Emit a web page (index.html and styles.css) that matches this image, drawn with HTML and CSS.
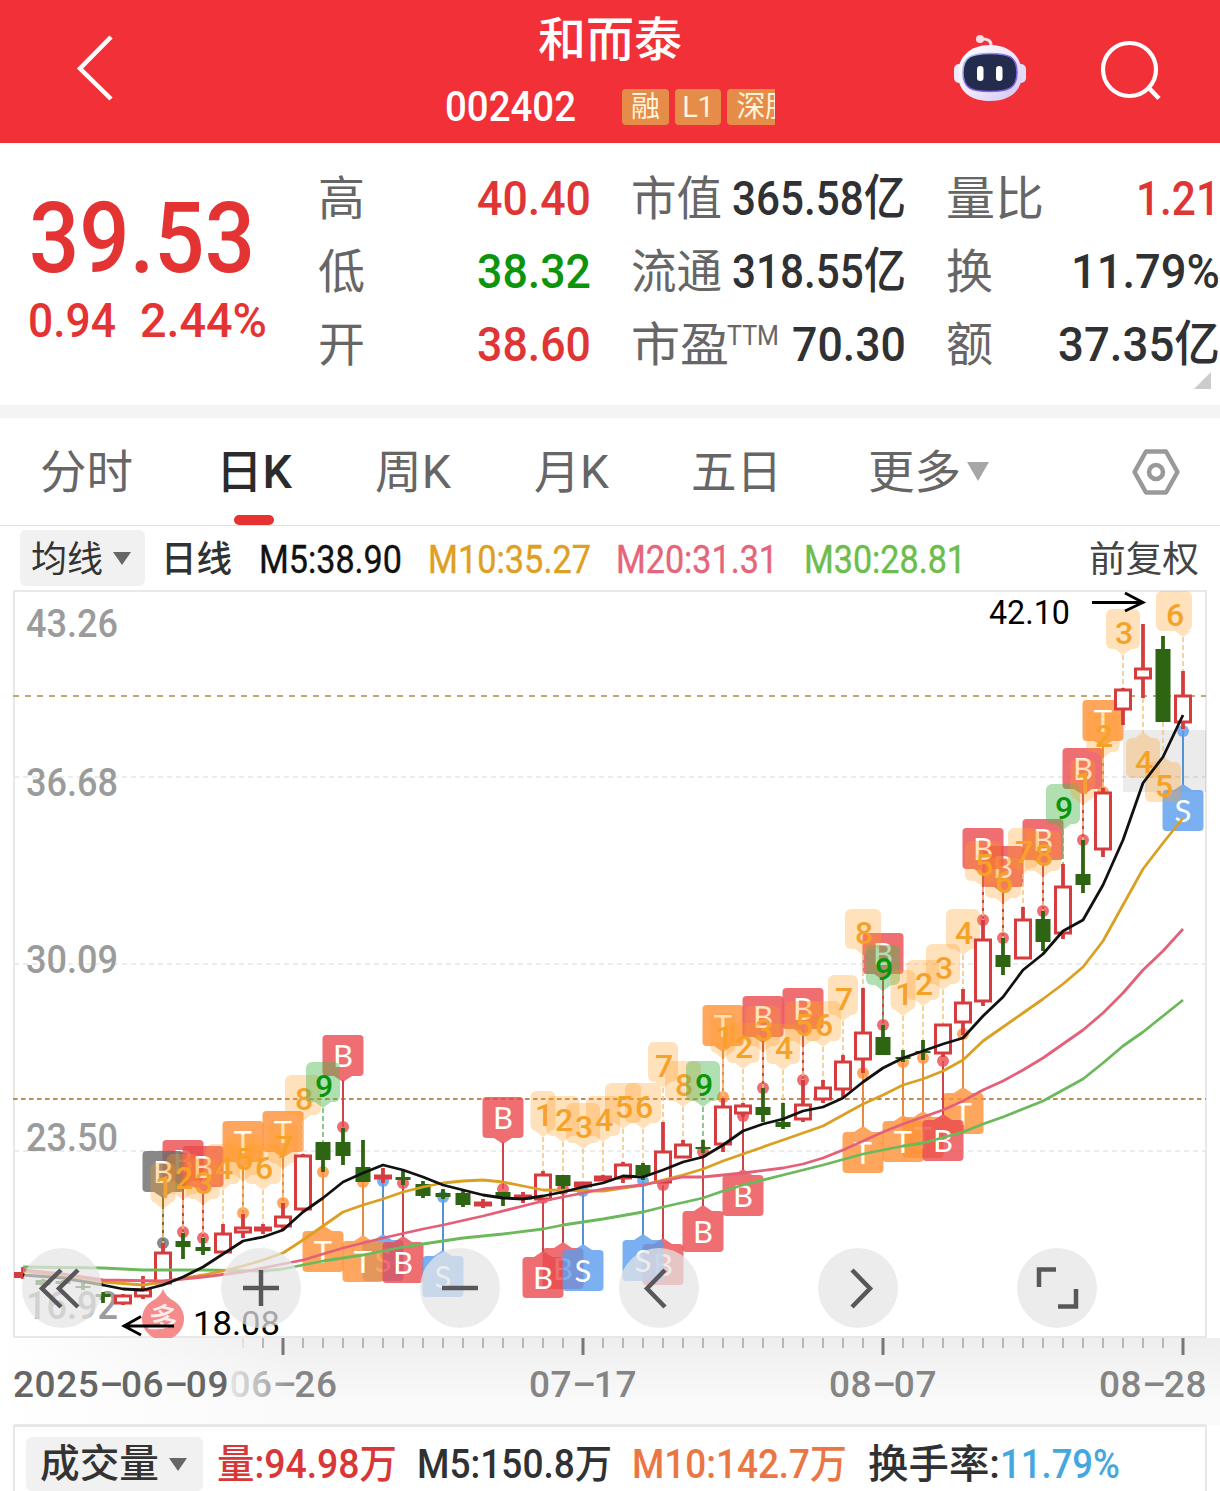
FILE: index.html
```html
<!DOCTYPE html>
<html lang="zh-CN">
<head>
<meta charset="utf-8">
<title>和而泰 002402</title>
<link rel="stylesheet" href="styles.css">
</head>
<body>
<header class="topbar">
  <svg class="back" width="44" height="70" viewBox="0 0 44 70"><path d="M39 4 8 35.500 39 66" fill="none" stroke="#fff" stroke-width="4.500"/></svg>
  <div class="heading">
    <h1 class="fit" data-w="144">和而泰</h1>
    <div class="subline">
      <span class="code fit" data-w="131">002402</span>
      <div class="tags"><span>融</span><span>L1</span><span>深股</span></div>
    </div>
  </div>
  <svg class="bot" width="76" height="70" viewBox="952 34 76 70">
    <defs>
      <linearGradient id="shell" x1="0" y1="0" x2="1" y2="1"><stop offset="0" stop-color="#fff"/><stop offset=".55" stop-color="#eee6fb"/><stop offset="1" stop-color="#cfc4f4"/></linearGradient>
      <linearGradient id="rim" x1="0" y1="0" x2="1" y2="1"><stop offset="0" stop-color="#a9dcf5"/><stop offset=".5" stop-color="#7a5ce0"/><stop offset="1" stop-color="#8b63e6"/></linearGradient>
    </defs>
    <path d="M981 39Q992 38 991 47" fill="none" stroke="#f6dfe9" stroke-width="3"/>
    <circle cx="980" cy="39" r="4" fill="#fbdce4"/>
    <rect x="954" y="64" width="10" height="19" rx="5" fill="#f0e9fa"/><rect x="1016" y="64" width="10" height="19" rx="5" fill="#e1dbf5"/>
    <path d="M990 45C1010 45 1022 57 1022 74C1022 91 1010 101 990 101C970 101 958 91 958 74C958 57 970 45 990 45Z" fill="url(#shell)"/>
    <path d="M990 53.500C1009 53.500 1017 57 1017 72.500C1017 88 1009 91.500 990 91.500C971 91.500 963 88 963 72.500C963 57 971 53.500 990 53.500Z" fill="#242c4e" stroke="url(#rim)" stroke-width="1.500"/>
    <rect x="977" y="66" width="6.500" height="15" rx="3.200" fill="#fff"/><rect x="996" y="66" width="6.500" height="15" rx="3.200" fill="#fff"/>
  </svg>
  <svg class="search" width="66" height="66" viewBox="1098 38 66 66"><g fill="none" stroke="#fff" stroke-width="4.200"><circle cx="1129.500" cy="69.500" r="26.500"/><path d="M1148 87 1159 98.500" stroke-width="4.500"/></g></svg>
</header>

<section class="quote">
  <div class="price">
    <div class="last"><span class="fit" data-w="226">39.53</span></div>
    <div class="change"><span class="fit" data-w="88">0.94</span><span class="fit" data-w="127">2.44%</span></div>
  </div>
  <div class="stats">
    <span class="k">高</span><span class="v up"><span class="fit" data-w="114">40.40</span></span>
    <span class="k"><span class="fit" data-w="91">市值</span></span><span class="v"><span class="fit" data-w="174">365.58亿</span></span>
    <span class="k"><span class="fit" data-w="98">量比</span></span><span class="v up"><span class="fit" data-w="84">1.21</span></span>
    <span class="k">低</span><span class="v down"><span class="fit" data-w="114">38.32</span></span>
    <span class="k"><span class="fit" data-w="91">流通</span></span><span class="v"><span class="fit" data-w="174">318.55亿</span></span>
    <span class="k">换</span><span class="v"><span class="fit" data-w="149">11.79%</span></span>
    <span class="k">开</span><span class="v up"><span class="fit" data-w="114">38.60</span></span>
    <span class="k"><span class="fit" data-w="98">市盈</span><small class="fit" data-w="52">TTM</small></span><span class="v"><span class="fit" data-w="114">70.30</span></span>
    <span class="k">额</span><span class="v"><span class="fit" data-w="162">37.35亿</span></span>
  </div>
  <i class="corner"></i>
</section>

<nav class="tabs">
  <a><span class="fit" data-w="93">分时</span></a>
  <a class="on"><span class="fit" data-w="76">日K</span></a>
  <a><span class="fit" data-w="76">周K</span></a>
  <a><span class="fit" data-w="75">月K</span></a>
  <a><span class="fit" data-w="91">五日</span></a>
  <a><span class="fit" data-w="93">更多</span><i class="tri light"></i></a>
  <svg class="gear" width="50" height="48" viewBox="0 0 50 48"><g fill="none" stroke="#999" stroke-width="4.500" stroke-linejoin="round"><path d="M15 3.500H35L46.500 24 35 44.500H15L3.500 24Z"/><circle cx="25" cy="24" r="7"/></g></svg>
</nav>

<div class="ma">
  <span class="pick"><span class="fit" data-w="72">均线</span><i class="tri"></i></span>
  <span class="fit name" data-w="71">日线</span>
  <span class="fit m5" data-w="143">M5:38.90</span>
  <span class="fit m10" data-w="163">M10:35.27</span>
  <span class="fit m20" data-w="162">M20:31.31</span>
  <span class="fit m30" data-w="162">M30:28.81</span>
  <span class="fit adj" data-w="110">前复权</span>
</div>

<main class="chart">
  <svg id="plot" width="1220" height="748" viewBox="0 590 1220 748"></svg>
  <div class="controls">
    <button><svg viewBox="0 0 80 80"><path d="M39 22 20 40.500 39 59M56 22 37 40.500 56 59"/></svg></button>
    <button><svg viewBox="0 0 80 80"><path d="M40 22V58M22 40H58"/></svg></button>
    <button><svg viewBox="0 0 80 80"><path d="M22 40H58"/></svg></button>
    <button><svg viewBox="0 0 80 80"><path d="M46 22 28 40.500 46 59"/></svg></button>
    <button><svg viewBox="0 0 80 80"><path d="M34 22 52 40.500 34 59"/></svg></button>
    <button><svg viewBox="0 0 80 80"><path d="M39 21.500H22V39M41 58.500H59V41"/></svg></button>
  </div>
</main>

<div class="axis"><svg id="dates" width="1220" height="87" viewBox="0 1338 1220 87"></svg></div>

<footer class="volume">
  <span class="pick"><span class="fit" data-w="119">成交量</span><i class="tri"></i></span>
  <span class="fit vol" data-w="180">量:94.98万</span>
  <span class="fit v5" data-w="195">M5:150.8万</span>
  <span class="fit v10" data-w="215">M10:142.7万</span>
  <span class="fit rate" data-w="132">换手率:</span>
  <span class="fit pct" data-w="120">11.79%</span>
</footer>
<script src="chart.js"></script>
</body>
</html>
```
FILE: styles.css
```css
* { box-sizing: border-box; }
body { margin: 0; width: 1220px; height: 1491px; overflow: hidden; background: #fff; color: #303133; font-family: Roboto, "Noto Sans CJK SC", sans-serif; }
.fit { display: inline-block; white-space: nowrap; }
.fit > span { display: inline-block; transform-origin: 0 50%; }

.topbar { height: 143px; background: #f13037; color: #fff; display: flex; align-items: flex-start; }
.back { margin: 33px 0 0 72px; flex: none; }
.heading { width: 338px; margin-left: 322px; flex: none; }
h1 { margin: 5px 0 0 100px; font-size: 47px; line-height: 70px; font-weight: 500; }
.subline { display: flex; align-items: center; height: 50px; margin-top: 7px; padding-left: 7px; }
.code { font-size: 42px; font-weight: 500; line-height: 50px; }
.tags { display: flex; gap: 6px; width: 153px; margin-left: 46px; overflow: hidden; }
.tags span { flex: none; width: 46.500px; height: 36px; border-radius: 4px; background: #e58c49; color: #fff3dc; font-size: 29px; line-height: 36px; text-align: center; letter-spacing: -.5px; }
.tags span:last-child { width: 76px; }
.bot { margin: 34px 0 0 176px; flex: none; }
.search { margin: 38px 0 0 70px; flex: none; }

.quote { position: relative; height: 275px; border-bottom: 13px solid #f4f4f4; display: flex; }
.price { width: 318px; color: #e43333; padding: 45px 0 0 29px; }
.last { font-size: 99px; line-height: 100px; font-weight: 500; }
.change { display: flex; gap: 24px; font-size: 49px; line-height: 50px; font-weight: 500; margin: 8px 0 0 -1px; }
.stats { display: grid; grid-template-columns: 110px 163px 161px 154px 138px 176px; grid-template-rows: repeat(3, 73px); padding-top: 19px; line-height: 73px; font-size: 48.500px; }
.stats > :nth-child(6n+3), .stats > :nth-child(6n+5) { padding-left: 40px; }
.k { color: #666; font-size: 47px; white-space: nowrap; display: flex; }
.v { font-weight: 500; display: flex; justify-content: flex-end; }
.k small { font-size: 27px; line-height: 56px; margin-left: 2px; }
.up { color: #df3535; }
.down { color: #0d940d; }
.corner { position: absolute; right: 9px; bottom: 16px; border: solid transparent; border-width: 0 0 17px 17px; border-bottom-color: #ccc; }

.tabs { height: 108px; border-bottom: 1px solid #e2e2e2; display: grid; grid-template-columns: 178px 157px 159px 157px 177px 264px 60px; padding-left: 40px; color: #666; font-size: 46px; line-height: 106px; }
.tabs a { position: relative; display: flex; align-items: center; white-space: nowrap; }
.tabs .on { color: #2b2b2b; font-weight: 500; }
.tabs .on .fit { margin-left: -2px; }
.tabs .on::after { content: ""; position: absolute; left: 16px; bottom: 0; width: 40px; height: 10px; border-radius: 5px; background: #e73232; }
.gear { align-self: center; margin-left: -1px; }
.tri { display: inline-block; border: 9.500px solid transparent; border-top: 13px solid #666; border-bottom: 0; }
.tri.light { border: 11.500px solid transparent; border-top: 19px solid #a6a6a6; border-bottom: 0; margin-left: 6px; }

.ma { height: 64px; padding: 4px 0 4px 20px; display: flex; align-items: center; font-size: 38px; line-height: 54px; }
.ma .fit { padding-top: 3px; height: 56px; }
.ma .pick { width: 125px; height: 56px; padding-left: 11px; gap: 10px; font-size: 36px; }
.pick { display: flex; align-items: center; background: #f1f1f1; border-radius: 6px; color: #333; }
.name { margin-left: 16px; font-size: 36px; font-weight: 500; }
.ma .m5, .ma .m10, .ma .m20, .ma .m30 { -webkit-text-stroke: .4px; }
.m5 { margin-left: 27px; color: #111; }
.m10 { margin-left: 26px; color: #dda022; }
.m20 { margin-left: 25px; color: #e5657a; }
.m30 { margin-left: 26px; color: #6bbd4c; }
.adj { margin-left: 123px; color: #444; font-size: 36px; }

.chart { position: relative; height: 748px; }
.chart > svg, .axis svg { display: block; }
.controls { position: absolute; left: 22px; bottom: 10px; display: flex; gap: 119px; }
.controls button { width: 80px; height: 80px; padding: 0; border: 0; border-radius: 50%; background: rgba(229, 229, 229, .73); }
.controls path { fill: none; stroke: #58585a; stroke-width: 4.500; }
.glyph, .mark { font-family: "Noto Sans CJK SC", sans-serif; }
.mark { font-family: Lato, "Noto Sans CJK SC", sans-serif; }

.axis { height: 87px; background: linear-gradient(90deg, #fff 0, rgba(255,255,255,0) 300px), linear-gradient(#eee, #fafafa 75%); }
.volume { height: 66px; margin: 0 13px; border: 2px solid #e8e8e8; border-bottom: 0; display: flex; align-items: center; padding: 10px 0 0 11px; font-size: 40px; line-height: 53px; font-weight: 500; white-space: nowrap; }
.volume .pick { width: 177px; height: 54px; padding-left: 14px; gap: 10px; font-size: 39px; }
.volume .fit { flex: none; }
.vol { margin-left: 14px; color: #d93636; }
.v5 { margin-left: 20px; }
.v10 { margin-left: 20px; color: #ea7644; }
.rate { margin-left: 21px; }
.pct { color: #45a7e0; }
```
FILE: chart.js
```js
// Squeeze each label to its column width
document.querySelectorAll('.fit').forEach(function (el) {
  var w = +el.dataset.w, t = document.createElement('span');
  t.textContent = el.textContent;
  el.textContent = '';
  el.appendChild(t);
  var n = t.getBoundingClientRect().width;
  t.style.transform = 'scaleX(' + w / n + ')';
  el.style.width = w + 'px';
});

// [high, bodyTop, bodyBottom, low, rising]
var candles = [
  [1267,1272,1278,1279,1],[1279,1280,1285,1286,0],[1280,1281,1284,1286,0],[1282,1286,1288,1290,0],[1292,1294,1297,1303,0],
  [1294,1295,1304,1305,1],[1276,1289,1297,1299,1],[1243,1252,1284,1285,1],[1233,1241,1247,1259,0],[1238,1247,1251,1255,0],
  [1224,1233,1253,1253,1],[1214,1227,1233,1238,1],[1224,1227,1231,1234,1],[1203,1216,1227,1229,1],[1154,1155,1210,1211,1],
  [1142,1142,1160,1172,0],[1128,1142,1156,1165,0],[1140,1167,1182,1182,0],[1168,1175,1179,1183,1],[1171,1177,1180,1185,0],
  [1181,1184,1196,1198,0],[1189,1193,1197,1199,0],[1189,1193,1205,1207,0],[1199,1202,1206,1208,1],[1192,1192,1197,1206,0],
  [1192,1195,1199,1203,1],[1171,1174,1200,1200,1],[1175,1175,1186,1190,0],[1182,1182,1187,1187,1],[1175,1176,1181,1181,1],
  [1162,1164,1179,1183,1],[1163,1165,1175,1180,0],[1122,1151,1183,1183,1],[1140,1144,1158,1158,1],[1140,1147,1149,1153,0],
  [1098,1106,1145,1152,1],[1103,1105,1114,1117,1],[1088,1107,1115,1122,0],[1103,1122,1127,1129,0],[1080,1104,1120,1122,1],
  [1080,1087,1100,1103,1],[1055,1061,1090,1097,1],[988,1032,1060,1073,1],[1025,1037,1055,1055,0],[1050,1057,1059,1062,0],
  [1040,1051,1053,1060,0],[1024,1024,1054,1057,1],[989,1002,1023,1035,1],[920,939,1002,1006,1],[938,955,967,975,0],
  [907,919,959,959,1],[911,919,942,951,0],[864,886,934,939,1],[840,874,885,893,0],[788,792,850,857,1],
  [688,689,710,725,1],[624,668,679,698,1],[636,649,722,722,0],[671,695,723,729,1]
];
// [x, letter, anchor y, below?], painted in this order
var signals = [
  [183,'B',1232,0],[1003,'B',938,0],[383,'S',1181,1],[563,'B',1189,1],[663,'B',1185,1],[963,'T',1034,1],[923,'T',1058,1],
  [163,'N',1243,0],[203,'B',1238,0],[243,'T',1213,0],[283,'T',1203,0],[343,'B',1127,0],[503,'B',1189,0],
  [723,'T',1097,0],[763,'B',1088,0],[803,'B',1080,0],[883,'B',1025,0],[983,'B',920,0],[1043,'B',911,0],
  [1083,'B',840,0],[1103,'T',792,0],[323,'T',1172,1],[363,'T',1182,1],[403,'B',1183,1],[443,'S',1197,1],
  [543,'B',1198,1],[583,'S',1191,1],[643,'S',1181,1],[703,'B',1152,1],[743,'B',1116,1],
  [863,'T',1073,1],[903,'T',1062,1],[943,'B',1061,1],[1183,'S',731,1]
];
// [x, digit, box top]
var counts = [
  [163,1,1163],[183,2,1154],[203,3,1159],[223,4,1144],[243,5,1135],[263,6,1144],[283,7,1123],[303,8,1075],[323,9,1062],
  [543,1,1091],[563,2,1096],[583,3,1103],[603,4,1096],[623,5,1083],[643,6,1083],[663,7,1042],[683,8,1061],[703,9,1061],
  [723,1,1013],[743,2,1023],[763,3,1006],[783,4,1024],[803,5,1001],[823,6,1001],[843,7,975],[863,8,909],[883,9,945],
  [903,1,970],[923,2,960],[943,3,944],[963,4,909],[983,5,841],[1003,6,858],[1023,7,828],[1043,8,831],[1063,9,784],
  [1083,1,759],[1103,2,712],[1123,3,609],[1183,6,591]
];
var averages = {
  '#6bb95a': '23,1267 103,1268 143,1270 203,1270 263,1271 283,1269 303,1265 323,1261 363,1255 403,1247 443,1241 463,1238 503,1234 543,1229 563,1225 603,1219 643,1212 663,1207 703,1198 723,1191 743,1185 783,1175 823,1165 863,1154 903,1146 923,1143 963,1132 983,1124 1003,1117 1043,1101 1083,1079 1103,1063 1123,1046 1143,1032 1163,1016 1183,1000',
  '#dba022': '23,1271 63,1276 103,1282 143,1285 163,1282 203,1275 223,1271 243,1266 263,1260 283,1253 303,1240 323,1226 343,1212 363,1205 383,1199 403,1192 423,1187 443,1183 463,1181 483,1180 503,1182 523,1186 543,1190 603,1191 623,1188 643,1185 663,1180 683,1175 703,1169 723,1161 743,1154 783,1140 823,1126 843,1115 863,1104 883,1095 903,1085 923,1079 943,1071 963,1060 983,1041 1003,1027 1023,1013 1043,999 1063,984 1083,967 1103,941 1123,905 1143,869 1163,843 1183,818',
  '#e46078': '23,1270 63,1274 103,1280 163,1281 203,1277 243,1272 283,1264 303,1260 343,1248 383,1238 423,1229 443,1225 483,1216 523,1206 543,1201 563,1197 603,1189 643,1185 663,1181 683,1177 703,1177 743,1173 783,1168 803,1164 823,1158 843,1150 863,1141 883,1132 903,1124 943,1110 963,1101 983,1090 1003,1081 1023,1070 1043,1058 1083,1030 1103,1013 1123,993 1143,970 1163,951 1183,929',
  '#111': '23,1275 63,1278 103,1285 123,1289 143,1290 163,1285 183,1277 203,1267 223,1254 243,1241 263,1237 283,1230 303,1212 323,1198 343,1182 363,1173 383,1165 403,1170 423,1177 443,1185 463,1190 483,1195 503,1198 523,1199 543,1196 563,1192 583,1187 603,1183 623,1176 643,1177 663,1170 683,1162 703,1157 723,1145 743,1131 763,1124 783,1119 803,1111 823,1107 843,1098 863,1082 883,1068 903,1058 923,1051 943,1044 963,1038 983,1016 1003,997 1023,970 1043,954 1063,931 1083,920 1103,885 1123,840 1143,783 1163,757 1183,715'
};
var fills = { B: '#eb4a4e', T: '#ff9137', S: '#5a9df0', N: '#6b6b6b' };
var stems = { B: '#c9454a', T: '#e68a43', S: '#5592d4', N: '#806830' };
var widths = [0, 25, 33, 34, 34, 36, 36, 30, 36, 34];
var out = '';
function line(x1, y1, x2, y2, c, w, extra) {
  out += '<path d="M' + x1 + ' ' + y1 + 'L' + x2 + ' ' + y2 + '" fill="none" stroke="' + c + '" stroke-width="' + w + '" ' + (extra || '') + '/>';
}
function rect(x, y, w, h, a) { out += '<rect x="' + x + '" y="' + y + '" width="' + w + '" height="' + h + '" ' + a + '/>'; }
function text(x, y, s, size, c, a) { out += '<text x="' + x + '" y="' + y + '" font-size="' + size + '" fill="' + c + '" ' + (a || '') + '>' + s + '</text>'; }
function high(x) { return candles[(x - 23) / 20][0]; }
function count(x, tx, d, top, below) {
  var g = d === 9, w = widths[d], c = g ? '#52b956' : '#ff9f24';
  var edge = below ? top : top + 40, tip = below ? top - 6 : top + 46;
  out += '<g fill="' + c + '" opacity="' + (g ? .45 : .3) + '">';
  rect(tx - w / 2, top, w, 40, 'rx="6"');
  out += '<path d="M' + (x - 8) + ' ' + edge + 'L' + x + ' ' + tip + 'L' + (x + 8) + ' ' + edge + 'Z"/></g>';
  text(tx + 1, top + 34.500, d, 32, g ? '#0b950b' : '#f5a229', 'text-anchor="middle" font-weight="500"');
}

rect(14, 591, 1192, 746, 'fill="none" stroke="#e8e8e8" stroke-width="2"');
[777, 964, 1151].forEach(function (y) { line(14, y, 1206, y, '#e6e6e6', 1.500, 'stroke-dasharray="5 4"'); });
line(13, 696, 1206, 696, '#c2a76e', 2, 'stroke-dasharray="6 6"');
line(13, 1099, 1206, 1099, '#c08a50', 2, 'stroke-dasharray="4.500 3.500"');
rect(1123, 730, 83, 62, 'fill="#000" opacity=".08"');
[['43.26', 637], ['36.68', 796], ['30.09', 973], ['23.50', 1151], ['16.92', 1319]].forEach(function (p) {
  text(26, p[1], p[0], 39, '#9b9b9b', 'font-weight="500" textLength="92" lengthAdjust="spacingAndGlyphs"');
});
signals.forEach(function (s) {
  var x = s[0], y = s[2], c = fills[s[1]], below = s[3], top = below ? y + 59 : y - 92;
  line(x, y, x, below ? top - 5 : top + 45, stems[s[1]], 2);
  out += '<circle cx="' + x + '" cy="' + y + '" r="6" fill="' + c + '" opacity=".8"/><g fill="' + c + '" opacity=".8">';
  rect(x - 20.500, top, 41, 41, 'rx="4"');
  out += below ? '<path d="M' + (x - 9) + ' ' + top + 'l9 -6l9 6Z"/>' : '<path d="M' + (x - 9) + ' ' + (top + 41) + 'l9 6l9 -6Z"/>';
  out += '</g>';
  text(x, top + 32, s[1] === 'N' ? 'B' : s[1], 31, '#fff', 'text-anchor="middle" class="mark"');
});
counts.forEach(function (n) {
  var x = n[0];
  line(x, n[2] + 46, x, high(x), n[1] === 9 ? '#6fba73' : '#f0c789', 1.600, 'stroke-dasharray="5 3"');
  count(x, x === 1183 ? 1174 : x, n[1], n[2], false);
});
line(1143, 698, 1143, 733, '#f0c789', 1.600, 'stroke-dasharray="5 3"');
line(1163, 722, 1163, 756, '#f0c789', 1.600, 'stroke-dasharray="5 3"');
count(1143, 1143, 4, 738, true);
count(1163, 1163, 5, 762, true);
candles.forEach(function (k, i) {
  var x = 23 + i * 20, c = k[4] ? '#d63c3d' : '#2e6512';
  line(x, k[0], x, k[1], c, 3.800);
  line(x, k[2], x, k[3], c, 3.800);
  if (i === 0) rect(14, k[1], 10, 6, 'fill="' + c + '"');
  else if (k[4]) rect(x - 7.500, k[1] + 1, 15, Math.max(2, k[2] - k[1] - 2), 'fill="#fff" stroke="' + c + '" stroke-width="3"');
  else rect(x - 7.500, k[1], 15, k[2] - k[1], 'fill="' + c + '"');
});
Object.keys(averages).forEach(function (c) {
  out += '<polyline points="' + averages[c] + '" fill="none" stroke="' + c + '" stroke-width="2.800" stroke-linejoin="round"/>';
});
out += '<path d="M163 1289Q166 1297 174 1301A21 21 0 1 1 152 1301Q160 1297 163 1289Z" fill="#f58b8b"/>';
text(163, 1329, '多', 30, '#fff', 'text-anchor="middle" font-weight="500" transform="rotate(12 163 1318)" opacity=".85"');
out += '<path d="M174 1326H124M141 1316.500 124 1326 141 1335M1092 602.500H1142M1125 593 1143 602.500 1125 611" fill="none" stroke="#000" stroke-width="2.800"/>';
text(193, 1335, '18.08', 34, '#000', 'textLength="87" lengthAdjust="spacingAndGlyphs"');
text(989, 624, '42.10', 34, '#000', 'textLength="81" lengthAdjust="spacingAndGlyphs"');
document.getElementById('plot').innerHTML = out;

out = '<defs><linearGradient id="fade" gradientUnits="userSpaceOnUse" x1="225" y1="0" x2="300" y2="0"><stop offset="0" stop-color="#858585" stop-opacity=".1"/><stop offset="1" stop-color="#858585"/></linearGradient></defs>';
for (var x = 243; x <= 1183; x += 20) {
  var major = (x - 283) % 300 === 0;
  line(x, 1338, x, major ? 1355 : 1348, major ? '#777' : '#999', major ? 3 : 1.300, x === 243 ? 'opacity=".3"' : '');
}
// Dates are set on a fixed pitch, one x position per character
[[13, '2025–06–09', '#666'], [229.500, '06–26', 'url(#fade)'], [529, '07–17', '#858585'], [829, '08–07', '#858585'], [1099, '08–28', '#858585']].forEach(function (d) {
  var xs = d[1].split('').map(function (ch, i) { return (d[0] + i * 21.600).toFixed(1); }).join(' ');
  text(xs, 1396.500, d[1], 37, d[2], 'font-weight="500"');
});
line(14, 1424.500, 1206, 1424.500, '#e8e8e8', 1);
document.getElementById('dates').innerHTML = out;
```
